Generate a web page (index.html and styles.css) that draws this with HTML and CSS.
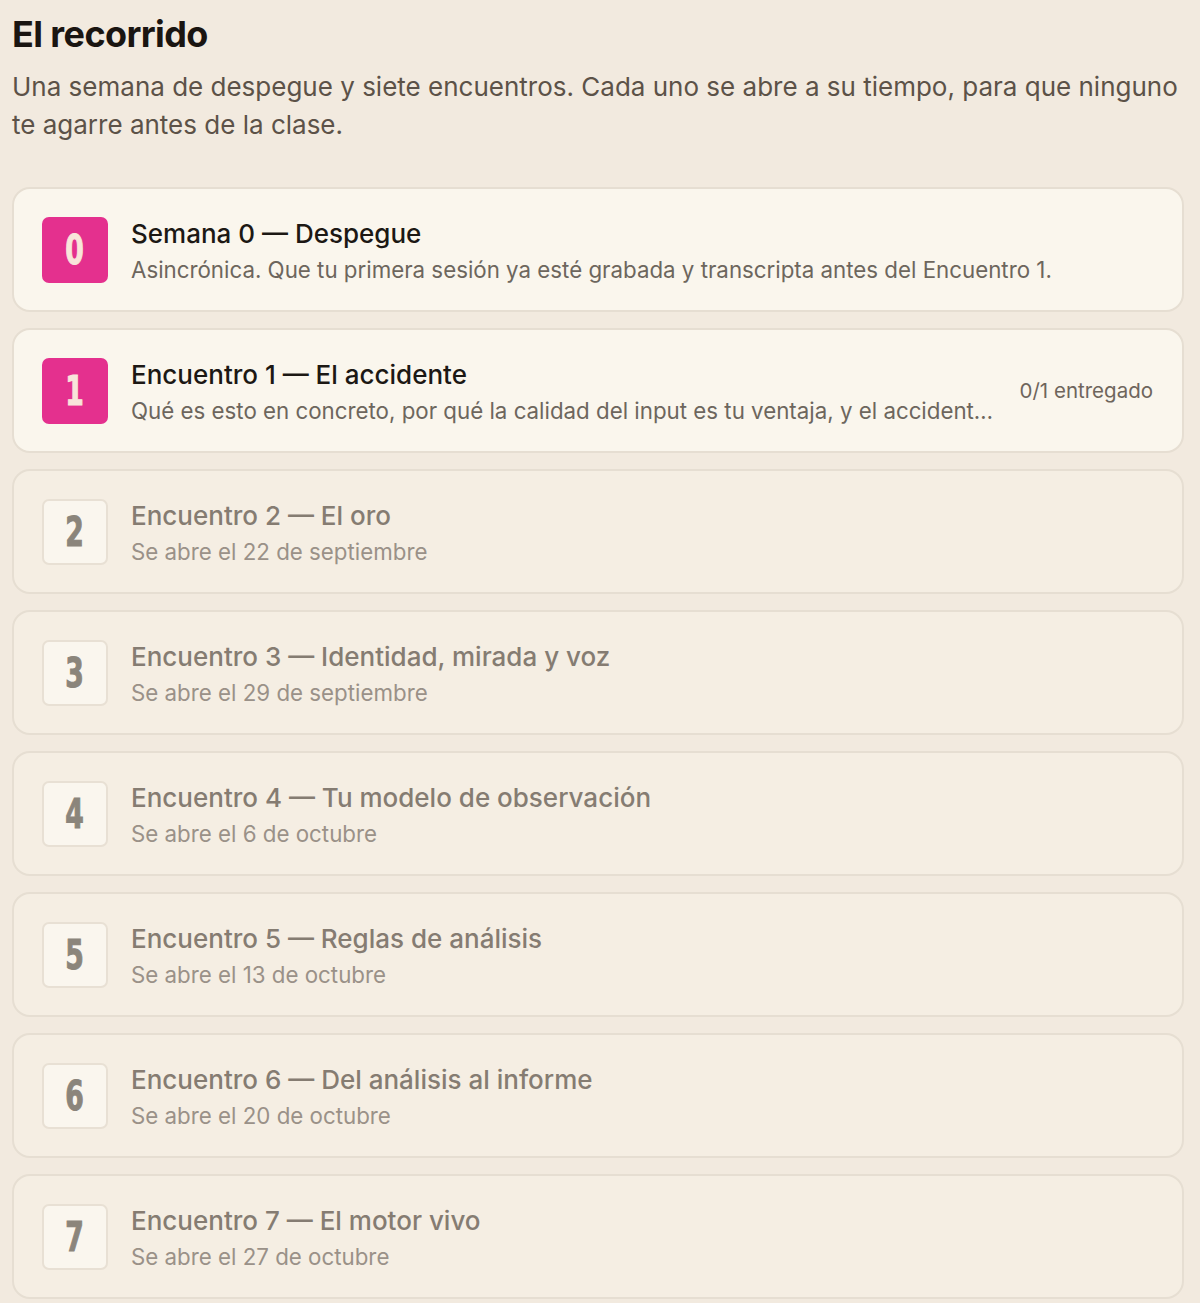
FILE: index.html
```html
<!doctype html>
<html lang="es">
<head>
<meta charset="utf-8">
<title>El recorrido</title>
<link rel="stylesheet" href="styles.css">
</head>
<body>

<div id="page">
  <h1>El recorrido</h1>
  <p class="lead">Una semana de despegue y siete encuentros. Cada uno se abre a su tiempo, para que ninguno te agarre antes de la clase.</p>

  <ol class="steps">
    <li class="step open">
      <span class="num"><b>0</b></span>
      <div class="txt">
        <div class="ttl">Semana 0 — Despegue</div>
        <div class="sub">Asincrónica. Que tu primera sesión ya esté grabada y transcripta antes del Encuentro 1.</div>
      </div>
    </li>
    <li class="step open">
      <span class="num"><b>1</b></span>
      <div class="txt">
        <div class="ttl">Encuentro 1 — El accidente</div>
        <div class="sub">Qué es esto en concreto, por qué la calidad del input es tu ventaja, y el accidente que lo cambia todo.</div>
      </div>
      <span class="meta">0/1 entregado</span>
    </li>
    <li class="step">
      <span class="num"><b>2</b></span>
      <div class="txt">
        <div class="ttl">Encuentro 2 — El oro</div>
        <div class="sub">Se abre el 22 de septiembre</div>
      </div>
    </li>
    <li class="step">
      <span class="num"><b>3</b></span>
      <div class="txt">
        <div class="ttl">Encuentro 3 — Identidad, mirada y voz</div>
        <div class="sub">Se abre el 29 de septiembre</div>
      </div>
    </li>
    <li class="step">
      <span class="num"><b>4</b></span>
      <div class="txt">
        <div class="ttl">Encuentro 4 — Tu modelo de observación</div>
        <div class="sub">Se abre el 6 de octubre</div>
      </div>
    </li>
    <li class="step">
      <span class="num"><b>5</b></span>
      <div class="txt">
        <div class="ttl">Encuentro 5 — Reglas de análisis</div>
        <div class="sub">Se abre el 13 de octubre</div>
      </div>
    </li>
    <li class="step">
      <span class="num"><b>6</b></span>
      <div class="txt">
        <div class="ttl">Encuentro 6 — Del análisis al informe</div>
        <div class="sub">Se abre el 20 de octubre</div>
      </div>
    </li>
    <li class="step">
      <span class="num"><b>7</b></span>
      <div class="txt">
        <div class="ttl">Encuentro 7 — El motor vivo</div>
        <div class="sub">Se abre el 27 de octubre</div>
      </div>
    </li>
  </ol>
</div>

</body>
</html>
```

FILE: styles.css
```css
BODY {
  margin: 0;
  padding: 0;
  background: #f2eadf;
  color: #1c1814;
  font-family: Inter, "Noto Sans", "Liberation Sans", sans-serif;
}
#page {
  padding: 12px 16px 0 12px;
}
H1 {
  margin: 0;
  font-size: 36px;
  line-height: 44px;
  font-weight: 700;
  letter-spacing: -0.6px;
  color: #1a1511;
}
.lead {
  margin: 12px 0 0 0;
  font-size: 26px;
  line-height: 38px;
  color: #5c5248;
}

/* session list */
.steps {
  list-style: none;
  margin: 43px 0 0 0;
  padding: 0;
  display: flex;
  flex-direction: column;
  gap: 16px;
}
.step {
  display: flex;
  align-items: center;
  gap: 23px;
  height: 121px;
  padding: 0 29px 0 28px;
  border: 2px solid #e6ded2;
  border-radius: 18px;
  background: #f5eee3;
}
.step.open {
  background: #faf6ed;
}
.num {
  flex: none;
  width: 62px;
  height: 62px;
  display: flex;
  align-items: center;
  justify-content: center;
  border: 2px solid #e8e0d4;
  border-radius: 7px;
  background: #faf6ee;
  color: #8b857b;
}
/* tall condensed digit */
.num B {
  display: block;
  font: bold 40px/1 "DejaVu Sans Condensed", "DejaVu Sans", sans-serif;
  -webkit-text-stroke: 1px currentColor;
  transform: scale(0.74, 1.02);
}
.open .num {
  background: #e4308e;
  border-color: #e4308e;
  color: #f8e5da;
}
.txt {
  flex: 1;
  min-width: 0;
  padding-top: 3px;
}
.ttl {
  font-size: 26px;
  line-height: 32px;
  font-weight: 500;
  color: #857c72;
  white-space: nowrap;
}
.open .ttl {
  color: #1c1814;
}
.sub {
  margin-top: 6px;
  font-size: 22.3px;
  line-height: 28px;
  color: #9a9188;
  white-space: nowrap;
  overflow: hidden;
  text-overflow: ellipsis;
}
.open .sub {
  color: #6d665d;
}
.meta {
  flex: none;
  font-size: 20.5px;
  color: #6e655c;
}
```
